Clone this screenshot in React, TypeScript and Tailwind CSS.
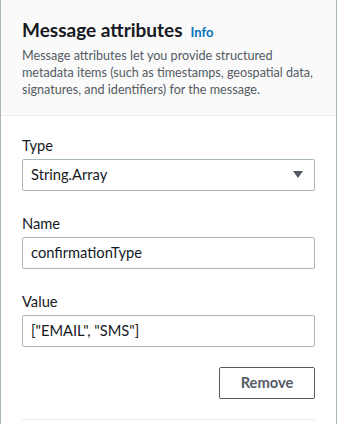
import React from 'react'

const font = { fontFamily: 'Lato, "Open Sans", sans-serif' }

function Field({ label, children }: { label: string; children: React.ReactNode }) {
  return (
    <div className="flex flex-col gap-[4px]">
      <label className="text-[14.7px] leading-[20px] text-[#16191f]">{label}</label>
      {children}
    </div>
  )
}

function TextInput({ value }: { value: string }) {
  return (
    <div className="h-[32px] flex items-center px-[8px] border border-[#aab7b8] rounded-[2px] bg-white text-[14.7px] text-[#16191f]">
      {value}
    </div>
  )
}

export default function App() {
  return (
    <div className="w-[337px] h-[424px] overflow-hidden bg-white" style={font}>
      <div className="border-x border-[#aab7b8] min-h-full">
        {/* Header */}
        <div className="bg-[#fafafa] border-b border-[#eaeded] px-[21px] pt-[19px] pb-[17px]">
          <div className="flex items-baseline gap-[8px]">
            <h2 className="text-[19px] leading-[22px] font-bold text-[#16191f]">Message attributes</h2>
            <a className="text-[13px] font-bold text-[#0073bb]">Info</a>
          </div>
          <p className="mt-[4px] text-[12.6px] leading-[17px] text-[#545b64]">
            Message attributes let you provide structured
            <br />
            metadata items (such as timestamps, geospatial data,
            <br />
            signatures, and identifiers) for the message.
          </p>
        </div>

        {/* Body */}
        <div className="px-[21px] pt-[19px] flex flex-col">
          <div className="flex flex-col gap-[22px]">
            <Field label="Type">
              <div className="h-[32px] flex items-center justify-between pl-[8px] pr-[11px] border border-[#aab7b8] rounded-[2px] bg-white text-[14.7px] text-[#16191f]">
                <span>String.Array</span>
                <svg width="10" height="7" viewBox="0 0 10 7">
                  <path d="M0 0H10L5 7Z" fill="#545b64" />
                </svg>
              </div>
            </Field>
            <Field label="Name">
              <TextInput value="confirmationType" />
            </Field>
            <Field label="Value">
              <TextInput value={'["EMAIL", "SMS"]'} />
            </Field>
          </div>

          <div className="flex justify-end mt-[20px]">
            <button className="w-[96px] h-[32px] border border-[#545b64] rounded-[2px] bg-white text-[14.7px] font-bold text-[#545b64]">
              Remove
            </button>
          </div>

          <div className="mt-[20px] border-t border-[#eaeded]" />
        </div>
      </div>
    </div>
  )
}
